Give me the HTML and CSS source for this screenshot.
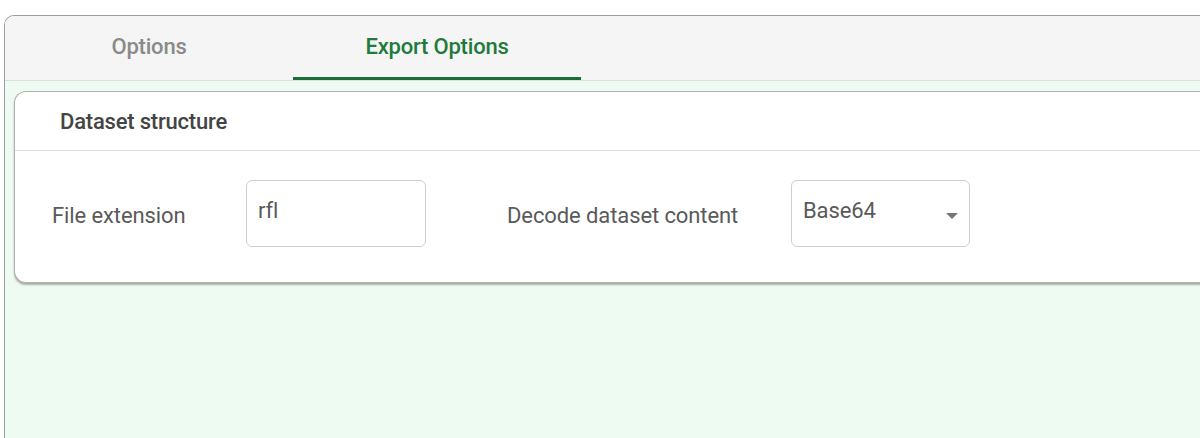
FILE: index.html
```html
<!DOCTYPE html>
<html>
<head>
<meta charset="utf-8">
<link rel="stylesheet" href="styles.css">
</head>
<body>
<div class="panel">
  <div class="tabs">
    <div class="tab">Options</div>
    <div class="tab active">Export Options</div>
  </div>
  <div class="content">
    <div class="card">
      <div class="card-header">Dataset structure</div>
      <div class="card-body">
        <div class="field-label first">File extension</div>
        <div class="input">rfl</div>
        <div class="field-label second">Decode dataset content</div>
        <div class="select">
          <span>Base64</span>
          <svg class="caret" width="12" height="6" viewBox="0 0 12 6"><path d="M0 0 L12 0 L6 6 Z" fill="#757575"/></svg>
        </div>
      </div>
    </div>
  </div>
</div>
</body>
</html>
```
FILE: styles.css
```css
html, body {
  margin: 0;
  padding: 0;
  background: #ffffff;
  overflow: hidden;
  height: 438px;
}
body {
  font-family: Roboto, "Liberation Sans", sans-serif;
}
.panel {
  margin: 15px -30px 0 4px;
  border: 1.5px solid #9e9e9e;
  border-right: none;
  border-bottom: none;
  border-radius: 10px 0 0 0;
  height: 423px;
  overflow: hidden;
  display: flex;
  flex-direction: column;
  box-sizing: border-box;
}
.tabs {
  display: flex;
  height: 64px;
  flex-shrink: 0;
  background: #f5f5f5;
  border-bottom: 1px solid #dedede;
}
.tab {
  width: 288px;
  display: flex;
  align-items: center;
  justify-content: center;
  font-size: 22px;
  font-weight: 500;
  color: #8a8a8a;
  box-sizing: border-box;
  padding-bottom: 3px;
  letter-spacing: -0.2px;
}
.tab.active {
  color: #1f7a3c;
  border-bottom: 3px solid #1a6f36;
  padding-bottom: 0;
}
.content {
  flex: 1;
  background: #eefbf2;
  padding: 10px 0 0 9px;
}
.card {
  background: #ffffff;
  border: 1px solid #b0b0b0;
  border-right: none;
  border-radius: 12px 0 0 12px;
  box-shadow: 0 2px 2px rgba(0,0,0,0.3);
  height: 192px;
  box-sizing: border-box;
}
.card-header {
  height: 58px;
  display: flex;
  align-items: center;
  padding-left: 45px;
  font-size: 22px;
  font-weight: 500;
  color: #444444;
  border-bottom: 1px solid #e0e0e0;
  letter-spacing: -0.2px;
}
.card-body {
  display: flex;
  align-items: center;
  padding: 29px 0 0 37px;
}
.field-label {
  font-size: 22px;
  color: #5a5a5a;
  padding-top: 4px;
  letter-spacing: -0.1px;
}
.field-label.first {
  width: 194px;
}
.field-label.second {
  margin-left: 81px;
  width: 284px;
}
.input, .select {
  box-sizing: border-box;
  height: 67px;
  border: 1px solid #cfcfcf;
  border-radius: 6px;
  font-size: 22px;
  color: #5a5a5a;
  padding: 17px 0 0 11px;
  letter-spacing: -0.1px;
}
.input {
  width: 180px;
}
.select {
  width: 179px;
  display: flex;
  align-items: flex-start;
  justify-content: space-between;
  padding-right: 11px;
}
.caret {
  margin-top: 15px;
}
```
